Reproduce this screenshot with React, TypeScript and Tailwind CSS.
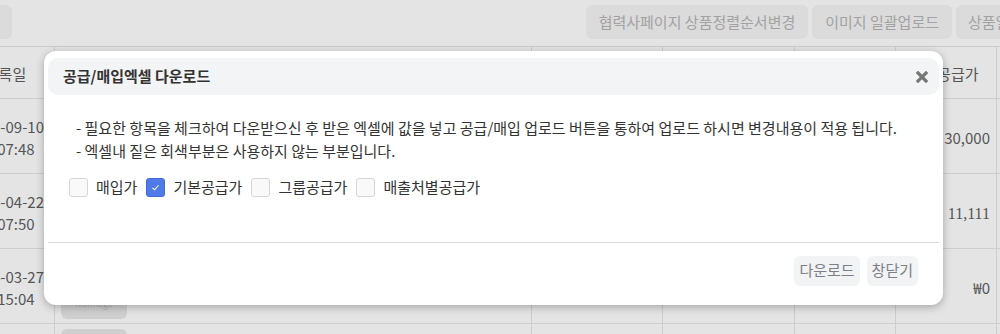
import { FC } from 'react'

const rows = [
  { date: '2023-09-10', time: '15:07:48', price: '30,000', serif: false },
  { date: '2024-04-22', time: '15:07:50', price: '11,111', serif: true },
  { date: '2024-03-27', time: '15:15:04', price: '₩0', serif: false },
  { date: '', time: '', price: '', serif: false },
]

const options = [
  { label: '매입가', checked: false },
  { label: '기본공급가', checked: true },
  { label: '그룹공급가', checked: false },
  { label: '매출처별공급가', checked: false },
]

const cell = 'border-r border-[#cdcdcd]'
const gridCols = 'grid grid-cols-[98px_477px_131px_132px_101px_101px_120px]'

const CheckBox: FC<{ checked: boolean }> = ({ checked }) =>
  checked ? (
    <span className="flex size-[19px] items-center justify-center rounded-[3px] border border-[#3f69d8] bg-[#4f7ae8]">
      <svg viewBox="0 0 12 12" className="size-[9px]" fill="none" stroke="white" strokeWidth="1.4">
        <path d="M2 6.4 L4.8 9 L10 3" />
      </svg>
    </span>
  ) : (
    <span className="size-[19px] rounded-[3px] border border-[#d6d6d6] bg-[#f9f9f9]" />
  )

export default function App() {
  return (
    <div className="relative h-[334px] w-[1000px] overflow-hidden bg-[#e4e4e4] font-['Noto_Sans_CJK_KR','Noto_Sans',sans-serif] text-[#555]">
      {/* toolbar */}
      <div className="flex h-[46px] items-start pt-[5px]">
        <div className="-ml-[40px] h-[34px] w-[52px] shrink-0 rounded-md bg-[#dbdbdb]" />
        <div className="ml-auto flex shrink-0 gap-[4px] -mr-[60px]">
          <button className="h-[34px] shrink-0 rounded-md bg-[#dbdbdb] px-[13px] text-[15px] text-[#a2a2a2]">
            협력사페이지 상품정렬순서변경
          </button>
          <button className="h-[34px] shrink-0 rounded-md bg-[#dbdbdb] px-[13px] text-[15px] text-[#a2a2a2]">
            이미지 일괄업로드
          </button>
          <button className="h-[34px] w-[104px] shrink-0 rounded-md bg-[#dbdbdb] px-[12px] text-left text-[15px] text-[#a2a2a2]">
            상품일괄
          </button>
        </div>
      </div>

      {/* table */}
      <div className="-ml-[43px] border-t border-[#cdcdcd] text-[15px]">
        <div className={`${gridCols} h-[52px] border-b border-[#cdcdcd]`}>
          <div className={`${cell} flex items-center justify-center pt-[3px]`}>등록일</div>
          <div className={cell} />
          <div className={cell} />
          <div className={cell} />
          <div className={cell} />
          <div className={`${cell} flex items-center justify-center pr-[4px] pt-[3px]`}>기본공급가</div>
          <div />
        </div>
        {rows.map((r, i) => (
          <div key={i} className={`${gridCols} h-[75px] border-b border-[#cdcdcd]`}>
            <div className={`${cell} flex flex-col items-center justify-center pt-[3px] leading-[22px]`}>
              <span>{r.date}</span>
              <span>{r.time}</span>
            </div>
            <div className={`${cell} pl-[6px] pt-[5px]`}>
              <div className="flex h-[65px] w-[66px] items-end justify-center rounded-[6px] bg-[#cfcfcf] pb-[9px] text-[9px] text-[#b0b0b0]">
                NoImage
              </div>
            </div>
            <div className={cell} />
            <div className={cell} />
            <div className={cell} />
            <div
              className={`${cell} flex items-center justify-end pr-[6px] pt-[5px] ${
                r.serif ? "font-['Liberation_Serif',serif] text-[16px]" : ''
              }`}
            >
              {r.price}
            </div>
            <div />
          </div>
        ))}
      </div>

      {/* modal */}
      <div className="absolute left-[44px] top-[51px] flex h-[254px] w-[899px] flex-col rounded-[12px] bg-white px-[4px] pt-[7px] text-[#333] shadow-[0_2px_8px_rgba(0,0,0,0.28)]">
        <div className="flex h-[37px] items-center justify-between rounded-[10px] bg-[#f3f4f6] pl-[15px] pr-[11px]">
          <h2 className="text-[15px] font-bold text-[#333]">공급/매입엑셀 다운로드</h2>
          <svg viewBox="0 0 12 12" className="size-[12px]" stroke="#777" strokeWidth="3.2" strokeLinecap="square">
            <path d="M2 2 L10 10 M10 2 L2 10" />
          </svg>
        </div>

        <div className="pl-[28px] pt-[21px] text-[15px] leading-[23px] text-[#333]">
          <p>- 필요한 항목을 체크하여 다운받으신 후 받은 엑셀에 값을 넣고 공급/매입 업로드 버튼을 통하여 업로드 하시면 변경내용이 적용 됩니다.</p>
          <p>- 엑셀내 짙은 회색부분은 사용하지 않는 부분입니다.</p>
        </div>

        <div className="mt-[14px] flex items-center gap-[9px] pl-[21px] text-[15px] text-[#333]">
          {options.map((o) => (
            <label key={o.label} className="flex items-center gap-[8px]">
              <CheckBox checked={o.checked} />
              <span>{o.label}</span>
            </label>
          ))}
        </div>

        <div className="mt-[43px] border-t border-[#d6d6dc]" />

        <div className="flex justify-end gap-[7px] pr-[21px] pt-[13px]">
          <button className="h-[30px] rounded-[6px] bg-[#f2f3f5] px-[5px] text-[15px] text-[#7d7f88]">다운로드</button>
          <button className="h-[30px] rounded-[6px] bg-[#f2f3f5] px-[5px] text-[15px] text-[#7d7f88]">창닫기</button>
        </div>
      </div>
    </div>
  )
}
